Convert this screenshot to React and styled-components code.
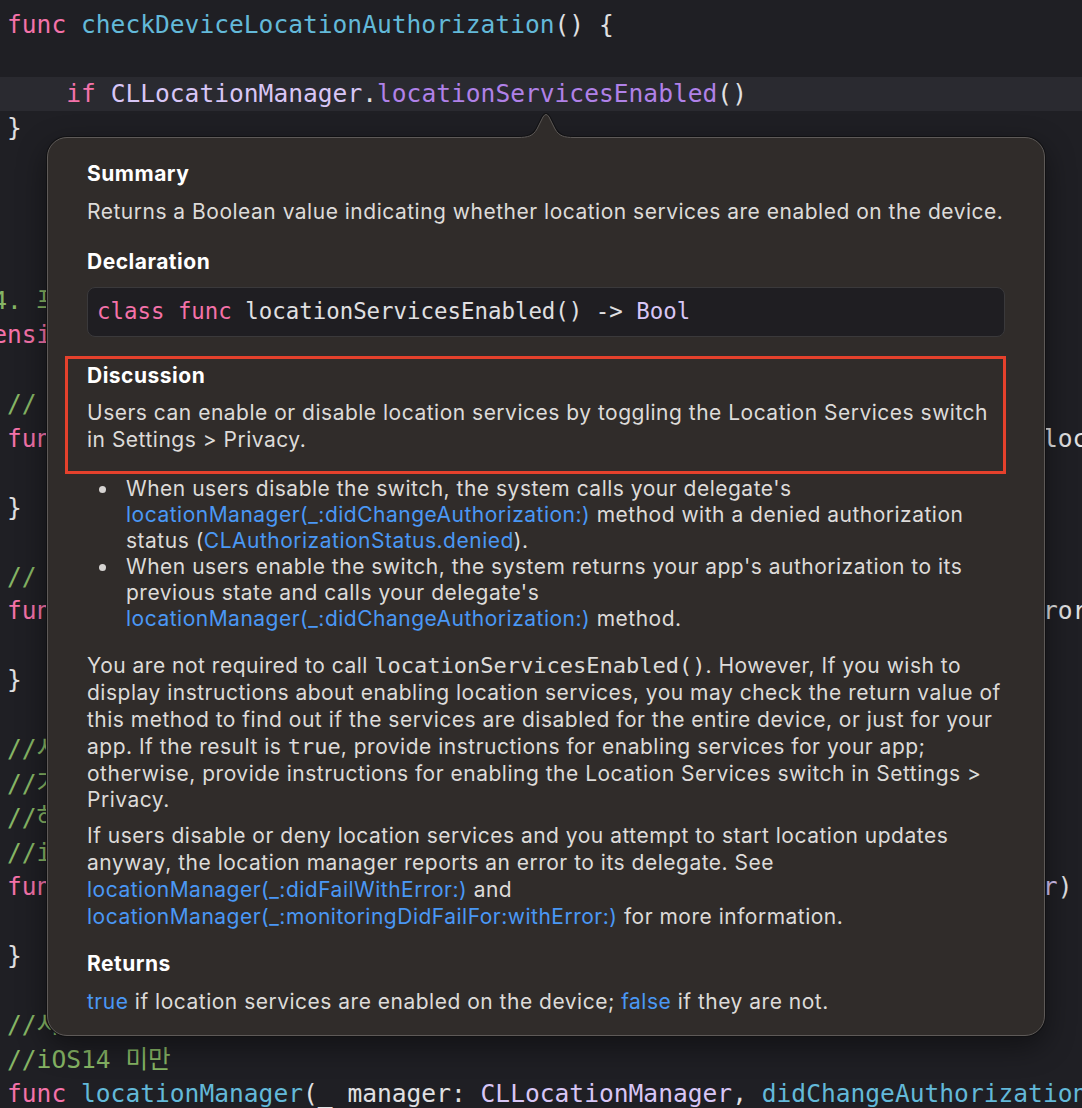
import React from 'react'
import styled, { createGlobalStyle } from 'styled-components'

const GlobalStyle = createGlobalStyle`
  html, body {
    margin: 0;
    padding: 0;
    background: #1f1f24;
  }
  body {
    width: 1082px;
    height: 1108px;
    overflow: hidden;
  }
`

const CHAR = 14.8

const palette = {
  kw: '#f472a9',
  fn: '#63b9d9',
  type: '#d8c6f6',
  method: '#b081e8',
  cmt: '#86b564',
  plain: '#e0e0e2',
}

const Editor = styled.div`
  position: relative;
  width: 1082px;
  height: 1108px;
  overflow: hidden;
  box-sizing: border-box;
  padding-top: 7.75px;
  background: #1f1f24;
  font-family: "DejaVu Sans Mono", "Noto Sans CJK KR", monospace;
  font-size: 24.58px;
`

const Line = styled.div`
  height: 34.5px;
  line-height: 34.5px;
  padding-left: 7px;
  white-space: pre;
  color: ${palette.plain};
  background: ${p => (p.$current ? '#2a2a30' : 'transparent')};
  margin-left: ${p => (p.$scroll ? `${-p.$scroll * CHAR}px` : '0')};
`

const T = styled.span`
  color: ${p => palette[p.$k] || palette.plain};
`

const Popover = styled.div`
  position: absolute;
  top: 137px;
  left: 47px;
  width: 998px;
  box-sizing: border-box;
  padding: 23px 39px 19px;
  background: #302c2a;
  border: 1px solid #5e5a58;
  border-radius: 20px;
  box-shadow: 0 0 0 1px #111113, 0 10px 30px rgba(0, 0, 0, 0.45);
  font-family: Inter, "Noto Sans", sans-serif;
  font-size: 21px;
  letter-spacing: 0.5px;
  color: #dddbd9;
`

const Arrow = styled.svg`
  position: absolute;
  top: -26px;
  left: 470px;
  overflow: visible;
`

const Heading = styled.h3`
  margin: ${p => p.$mt || 0}px 0 0;
  font-size: 21px;
  line-height: 26px;
  font-weight: 700;
  color: #ffffff;
`

const Para = styled.p`
  margin: ${p => p.$mt || 0}px 0 0;
  line-height: 26.8px;
  white-space: nowrap;
`

const Link = styled.span`
  color: #4a98f5;
`

const Mono = styled.span`
  font-family: "DejaVu Sans Mono", monospace;
  font-size: 22px;
  line-height: 1;
  letter-spacing: 0;
`

const CodeBox = styled.div`
  margin-top: 12px;
  height: 50px;
  box-sizing: border-box;
  padding-left: 9px;
  border: 1px solid #3a393b;
  border-radius: 8px;
  background: #1f1e22;
  font-family: "DejaVu Sans Mono", monospace;
  font-size: 22.4px;
  letter-spacing: 0;
  line-height: 46px;
  color: ${palette.plain};
  white-space: pre;
`

const Marked = styled.div`
  margin: 19px -1px 2px -22px;
  padding: 4px 0 18px 19px;
  border: 3px solid #e5412c;
`

const List = styled.ul`
  margin: 0;
  padding: 0;
  list-style: none;
`

const Item = styled.li`
  display: grid;
  grid-template-columns: 30px 1fr;
  column-gap: 9px;
  line-height: 26px;
  white-space: nowrap;
`

const Dot = styled.span`
  justify-self: center;
  width: 7px;
  height: 7px;
  margin-top: 10px;
  border-radius: 50%;
  background: #d6d4d2;
`

const code = [
  [['kw', 'func'], ['', ' '], ['fn', 'checkDeviceLocationAuthorization'], ['', '() {']],
  [],
  [['', '    '], ['kw', 'if'], ['', ' '], ['type', 'CLLocationManager'], ['', '.'], ['method', 'locationServicesEnabled'], ['', '()']],
  [['', '}']],
  [], [], [], [],
  [['cmt', '// 4. 프로토콜 채택']],
  [['kw', 'extension'], ['', ' ViewController: '], ['type', 'CLLocationManagerDelegate'], ['', ' {']],
  [],
  [['cmt', '// 위치 정보를 성공적으로 가져왔을 때']],
  [['kw', 'func'], ['', ' '], ['fn', 'locationManager'], ['', '(_ manager: '], ['type', 'CLLocationManager'], ['', ', '], ['fn', 'didUpdateLocations'], ['', ' locations: ['], ['type', 'CLLocation'], ['', ']) {']],
  [],
  [['', '}']],
  [],
  [['cmt', '// 위치 정보를 가져오지 못했을 때']],
  [['kw', 'func'], ['', ' '], ['fn', 'locationManager'], ['', '(_ manager: '], ['type', 'CLLocationManager'], ['', ', '], ['fn', 'didFailWithError'], ['', ' error: '], ['type', 'Error'], ['', ') {']],
  [],
  [['', '}']],
  [],
  [['cmt', '//시스템 설정에서 위치 권한이 바뀌면 호출']],
  [['cmt', '//기기의 위치 서비스 설정이 바뀌어도 호출']],
  [['cmt', '//하지만 앱 권한 상태가 바뀐 경우에만']],
  [['cmt', '//iOS14 이상']],
  [['kw', 'func'], ['', ' '], ['fn', 'locationManagerDidChangeAuthorization'], ['', '(_ manager: '], ['type', 'CLLocationManager'], ['', ') {']],
  [],
  [['', '}']],
  [],
  [['cmt', '//시스템 권한 변경']],
  [['cmt', '//iOS14 미만']],
  [['kw', 'func'], ['', ' '], ['fn', 'locationManager'], ['', '(_ manager: '], ['type', 'CLLocationManager'], ['', ', '], ['fn', 'didChangeAuthorization'], ['', ' status: '], ['type', 'CLAuthorizationStatus'], ['', ') {']],
]

function PopoverArrow() {
  const curve = 'M0,25.5 C10,25.5 15,24 19,17 L25,5 Q28,0 31,5 L37,17 C41,24 46,25.5 56,25.5'
  return (
    <Arrow width="56" height="28" viewBox="0 0 56 28">
      <path d={curve} fill="none" stroke="#111113" strokeWidth="3" />
      <path d={curve + ' L56,28 L0,28 Z'} fill="#302c2a" />
      <path d={curve} fill="none" stroke="#5e5a58" strokeWidth="1" />
    </Arrow>
  )
}

export default function App() {
  return (
    <>
      <GlobalStyle />
      <Editor>
        {code.map((tokens, i) => (
          <Line key={i} $current={i === 2} $scroll={i === 8 || i === 9 ? 4 : 0}>
            {tokens.length === 0 ? ' ' : tokens.map(([k, s], j) => <T key={j} $k={k}>{s}</T>)}
          </Line>
        ))}

        <Popover>
          <PopoverArrow />
          <Heading>Summary</Heading>
          <Para $mt={12}>Returns a Boolean value indicating whether location services are enabled on the device.</Para>

          <Heading $mt={23}>Declaration</Heading>
          <CodeBox>
            <T $k="kw">class</T> <T $k="kw">func</T> locationServicesEnabled() -&gt; <T $k="type">Bool</T>
          </CodeBox>

          <Marked>
            <Heading>Discussion</Heading>
            <Para $mt={11}>
              Users can enable or disable location services by toggling the Location Services switch
              <br />in Settings &gt; Privacy.
            </Para>
          </Marked>

          <List>
            <Item>
              <Dot />
              <span>
                When users disable the switch, the system calls your delegate's
                <br /><Link>locationManager(_:didChangeAuthorization:)</Link> method with a denied authorization
                <br />status (<Link>CLAuthorizationStatus.denied</Link>).
              </span>
            </Item>
            <Item>
              <Dot />
              <span>
                When users enable the switch, the system returns your app's authorization to its
                <br />previous state and calls your delegate's
                <br /><Link>locationManager(_:didChangeAuthorization:)</Link> method.
              </span>
            </Item>
          </List>

          <Para $mt={21}>
            You are not required to call <Mono>locationServicesEnabled()</Mono>. However, If you wish to
            <br />display instructions about enabling location services, you may check the return value of
            <br />this method to find out if the services are disabled for the entire device, or just for your
            <br />app. If the result is <Mono>true</Mono>, provide instructions for enabling services for your app;
            <br />otherwise, provide instructions for enabling the Location Services switch in Settings &gt;
            <br />Privacy.
          </Para>
          <Para $mt={9}>
            If users disable or deny location services and you attempt to start location updates
            <br />anyway, the location manager reports an error to its delegate. See
            <br /><Link>locationManager(_:didFailWithError:)</Link> and
            <br /><Link>locationManager(_:monitoringDidFailFor:withError:)</Link> for more information.
          </Para>

          <Heading $mt={21}>Returns</Heading>
          <Para $mt={12}>
            <Link>true</Link> if location services are enabled on the device; <Link>false</Link> if they are not.
          </Para>
        </Popover>
      </Editor>
    </>
  )
}
